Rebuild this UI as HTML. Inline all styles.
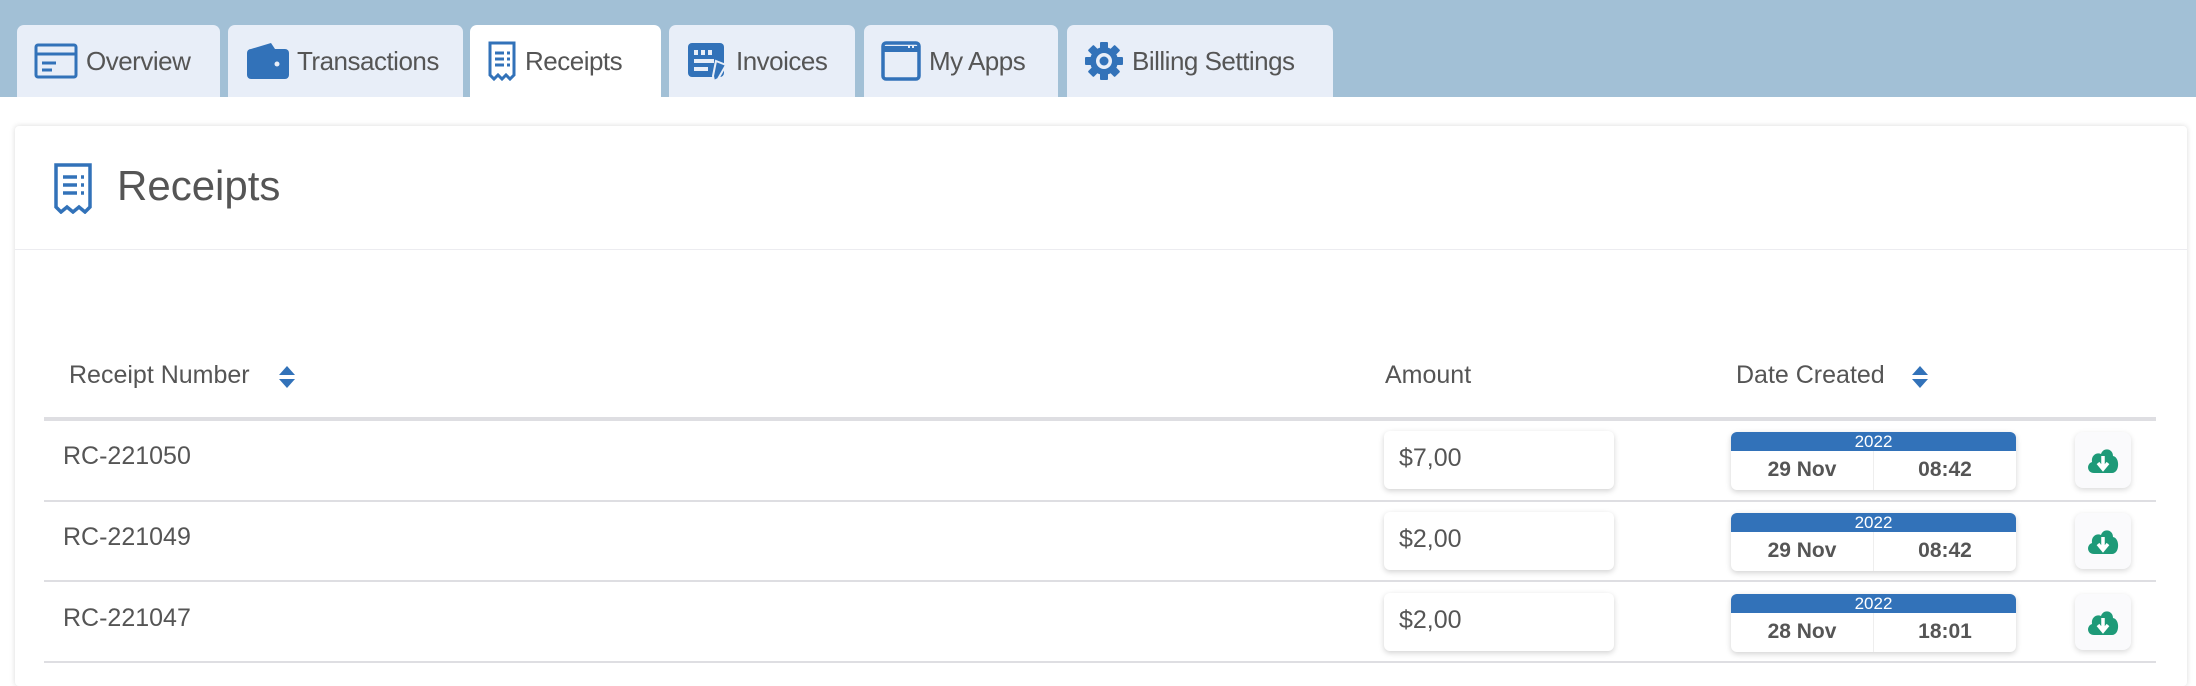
<!DOCTYPE html>
<html><head><meta charset="utf-8"><style>
*{margin:0;padding:0;box-sizing:border-box}
body{width:2196px;height:666px;overflow:hidden;background:#fff;font-family:"Liberation Sans",sans-serif;color:#555;position:relative}
.band{position:absolute;left:0;top:0;width:2196px;height:97px;background:#a2c0d6}
.tab{position:absolute;top:25px;height:72px;background:#e8eef8;border-radius:7px 7px 0 0;display:flex;align-items:center;font-size:26px;color:#555;letter-spacing:-0.5px}
.tab.act{background:#fff}
.tab svg{margin:0 8px 0 17px;flex:none}
.card{position:absolute;left:15px;top:126px;width:2172px;height:560px;background:#fff;border-radius:4px;box-shadow:0 0 6px rgba(0,0,0,.15)}
.abs{position:absolute}
.hline{position:absolute;left:44px;width:2112px;height:2px;background:#dedee2}
.th{position:absolute;top:361px;font-size:25px;color:#555}
.rn{position:absolute;left:63px;font-size:25px;color:#555}
.amt{position:absolute;left:1384px;width:230px;height:58px;background:#fff;border-radius:6px;box-shadow:0 2px 6px rgba(0,0,0,.18);font-size:25px;padding:13px 0 0 15px}
.date{position:absolute;left:1731px;width:285px;height:58px;background:#fff;border-radius:6px;box-shadow:0 2px 6px rgba(0,0,0,.18);overflow:hidden}
.date .y{height:19px;background:#3272b9;color:#fff;font-size:17px;text-align:center;line-height:19px}
.date .d{display:flex;height:39px;font-weight:bold;font-size:21px;color:#555}
.date .d div{flex:1;text-align:center;line-height:37px}
.date .d div:first-child{border-right:1px solid #eee}
.dl{position:absolute;left:2075px;width:56px;height:56px;background:#fafafc;border-radius:8px;box-shadow:0 2px 6px rgba(0,0,0,.15);display:flex;align-items:center;justify-content:center}
</style></head><body>
<div class="band"></div>
<div class="tab" style="left:17px;width:203px"><svg width="44" height="36" viewBox="0 0 44 36"><rect x="2" y="2" width="40" height="32" rx="2" fill="none" stroke="#3272b9" stroke-width="3"/><line x1="2" y1="11" x2="42" y2="11" stroke="#3272b9" stroke-width="3"/><line x1="8" y1="20" x2="22" y2="20" stroke="#3272b9" stroke-width="3"/><line x1="8" y1="27" x2="18" y2="27" stroke="#3272b9" stroke-width="3"/></svg>Overview</div>
<div class="tab" style="left:228px;width:235px"><svg width="44" height="40" viewBox="0 0 44 40"><path d="M26 2 L30 8 L6 8Z" fill="#3272b9"/><rect x="2" y="8" width="42" height="30" rx="4" fill="#3272b9"/><circle cx="32" cy="23" r="2.5" fill="#e8eef8"/></svg>Transactions</div>
<div class="tab act" style="left:470px;width:191px"><svg width="30" height="40" viewBox="0 0 30 40"><path d="M3 2 H27 V34 L23 38 L19 34 L15 38 L11 34 L7 38 L3 34Z" fill="none" stroke="#3272b9" stroke-width="3"/><line x1="8" y1="12" x2="17" y2="12" stroke="#3272b9" stroke-width="3"/><line x1="8" y1="18" x2="17" y2="18" stroke="#3272b9" stroke-width="3"/><line x1="8" y1="24" x2="17" y2="24" stroke="#3272b9" stroke-width="3"/><line x1="20" y1="12" x2="23" y2="12" stroke="#3272b9" stroke-width="3"/><line x1="20" y1="18" x2="23" y2="18" stroke="#3272b9" stroke-width="3"/><line x1="20" y1="24" x2="23" y2="24" stroke="#3272b9" stroke-width="3"/></svg>Receipts</div>
<div class="tab" style="left:669px;width:186px"><svg width="42" height="40" viewBox="0 0 42 40"><rect x="2" y="2" width="36" height="34" rx="4" fill="#3272b9"/><rect x="8" y="9" width="4" height="5" fill="#e8eef8"/><rect x="15" y="9" width="4" height="5" fill="#e8eef8"/><rect x="22" y="9" width="4" height="5" fill="#e8eef8"/><rect x="8" y="18" width="20" height="4" fill="#e8eef8"/><rect x="8" y="26" width="14" height="4" fill="#e8eef8"/><path d="M30 20 L40 24 L32 38 L28 40 L27 35Z" fill="#3272b9" stroke="#e8eef8" stroke-width="2"/></svg>Invoices</div>
<div class="tab" style="left:864px;width:194px"><svg width="40" height="40" viewBox="0 0 40 40"><rect x="2" y="2" width="36" height="36" rx="3" fill="none" stroke="#3272b9" stroke-width="3.5"/><line x1="2" y1="8" x2="38" y2="8" stroke="#3272b9" stroke-width="6"/><rect x="27" y="4" width="2" height="3" fill="#e8eef8"/><rect x="31" y="4" width="2" height="3" fill="#e8eef8"/></svg>My Apps</div>
<div class="tab" style="left:1067px;width:266px"><svg width="40" height="40" viewBox="0 0 40 40"><g fill="#3272b9"><rect x="16" y="1" width="8" height="38" rx="1"/><rect x="16" y="1" width="8" height="38" rx="1" transform="rotate(45 20 20)"/><rect x="16" y="1" width="8" height="38" rx="1" transform="rotate(90 20 20)"/><rect x="16" y="1" width="8" height="38" rx="1" transform="rotate(135 20 20)"/><circle cx="20" cy="20" r="14"/></g><circle cx="20" cy="20" r="8" fill="#e8eef8"/><circle cx="20" cy="20" r="4.5" fill="#3272b9"/></svg>Billing Settings</div>

<div class="card"></div>
<svg class="abs" style="left:53px;top:163px" width="40" height="51" viewBox="0 0 40 51"><path d="M3 2 H37 V44 L32 49 L26 44 L20 49 L14 44 L8 49 L3 44Z" fill="none" stroke="#3272b9" stroke-width="3.5"/><line x1="10" y1="14" x2="24" y2="14" stroke="#3272b9" stroke-width="3.5"/><line x1="10" y1="22" x2="24" y2="22" stroke="#3272b9" stroke-width="3.5"/><line x1="10" y1="30" x2="24" y2="30" stroke="#3272b9" stroke-width="3.5"/><line x1="28" y1="14" x2="31" y2="14" stroke="#3272b9" stroke-width="3.5"/><line x1="28" y1="22" x2="31" y2="22" stroke="#3272b9" stroke-width="3.5"/><line x1="28" y1="30" x2="31" y2="30" stroke="#3272b9" stroke-width="3.5"/></svg>
<div class="abs" style="left:117px;top:162px;font-size:42px;color:#555">Receipts</div>
<div class="abs" style="left:15px;top:249px;width:2172px;height:1px;background:#ececf0"></div>

<div class="th" style="left:69px">Receipt Number</div>
<svg class="abs" style="left:278px;top:365px" width="18" height="24" viewBox="0 0 18 24"><path d="M9 1 L17 10 H1Z M1 14 H17 L9 23Z" fill="#3272b9"/></svg>
<div class="th" style="left:1385px">Amount</div>
<div class="th" style="left:1736px">Date Created</div>
<svg class="abs" style="left:1911px;top:365px" width="18" height="24" viewBox="0 0 18 24"><path d="M9 1 L17 10 H1Z M1 14 H17 L9 23Z" fill="#3272b9"/></svg>
<div class="hline" style="top:417px;height:4px"></div>

<div class="rn" style="top:442px">RC-221050</div>
<div class="amt" style="top:431px">$7,00</div>
<div class="date" style="top:432px"><div class="y">2022</div><div class="d"><div>29 Nov</div><div>08:42</div></div></div>
<div class="dl" style="top:432px"><svg width="36" height="30" viewBox="0 0 36 30"><path d="M9 28 C2 28 1 19 7 17 C6 10 12 7 16 9 C18 2 28 3 28 11 C35 12 35 28 27 28Z" fill="#1e9a78"/><path d="M18 11 V22 M13 18 L18 24 L23 18" stroke="#fff" stroke-width="3.5" fill="none"/></svg></div>
<div class="hline" style="top:500px"></div>

<div class="rn" style="top:523px">RC-221049</div>
<div class="amt" style="top:512px">$2,00</div>
<div class="date" style="top:513px"><div class="y">2022</div><div class="d"><div>29 Nov</div><div>08:42</div></div></div>
<div class="dl" style="top:513px"><svg width="36" height="30" viewBox="0 0 36 30"><path d="M9 28 C2 28 1 19 7 17 C6 10 12 7 16 9 C18 2 28 3 28 11 C35 12 35 28 27 28Z" fill="#1e9a78"/><path d="M18 11 V22 M13 18 L18 24 L23 18" stroke="#fff" stroke-width="3.5" fill="none"/></svg></div>
<div class="hline" style="top:580px"></div>

<div class="rn" style="top:604px">RC-221047</div>
<div class="amt" style="top:593px">$2,00</div>
<div class="date" style="top:594px"><div class="y">2022</div><div class="d"><div>28 Nov</div><div>18:01</div></div></div>
<div class="dl" style="top:594px"><svg width="36" height="30" viewBox="0 0 36 30"><path d="M9 28 C2 28 1 19 7 17 C6 10 12 7 16 9 C18 2 28 3 28 11 C35 12 35 28 27 28Z" fill="#1e9a78"/><path d="M18 11 V22 M13 18 L18 24 L23 18" stroke="#fff" stroke-width="3.5" fill="none"/></svg></div>
<div class="hline" style="top:661px"></div>
</body></html>
